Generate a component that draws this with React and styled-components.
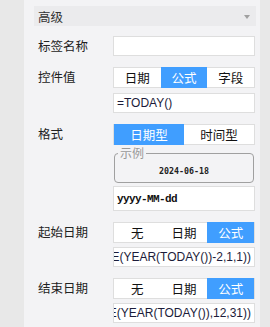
import React from 'react';
import styled, { createGlobalStyle } from 'styled-components';

const GlobalStyle = createGlobalStyle`
  body {
    margin: 0;
    background: #e8e8e8;
    font-family: "Noto Sans CJK SC", "Noto Sans", sans-serif;
    color: #222;
  }
`;

const Panel = styled.div`
  margin-left: 24px;
  width: 236px;
  min-height: 327px;
  box-sizing: border-box;
  background: #f3f3f5;
  padding: 6px 4px 0 10px;
`;

const Header = styled.div`
  height: 20px;
  background: #ebebed;
  display: flex;
  align-items: center;
  justify-content: space-between;
  padding: 0 6px 0 4px;
  font-size: 12.5px;
  color: #333;
`;

const Arrow = styled.span`
  width: 0;
  height: 0;
  border-left: 3.5px solid transparent;
  border-right: 3.5px solid transparent;
  border-top: 4px solid #a0a0a0;
  margin-top: 2px;
`;

const Rows = styled.div`
  display: flex;
  flex-direction: column;
  gap: 11px;
  margin-top: 10px;
  padding-left: 4px;
`;

const Row = styled.div`
  display: grid;
  grid-template-columns: 75px 142px;
`;

const Label = styled.div`
  font-size: 12.5px;
  line-height: 20px;
  color: #222;
`;

const Controls = styled.div`
  display: flex;
  flex-direction: column;
  gap: ${({ gap }) => gap}px;
`;

const Segmented = styled.div`
  display: flex;
  height: 21px;
  background: #fff;
  box-sizing: border-box;
  border: 1px solid #dedede;
`;

const Segment = styled.div`
  flex: 1;
  display: flex;
  align-items: center;
  justify-content: center;
  font-size: 12.5px;
  margin: -1px 0;
  background: ${({ active }) => (active ? '#409eff' : 'transparent')};
  color: ${({ active }) => (active ? '#fff' : '#111')};
`;

const Field = styled.div`
  height: ${({ tall }) => (tall ? 25 : 20)}px;
  box-sizing: border-box;
  background: #fff;
  border: 1px solid #dedede;
  display: flex;
  align-items: center;
  justify-content: ${({ end }) => (end ? 'flex-end' : 'flex-start')};
  overflow: hidden;
  white-space: nowrap;
  padding: 0 3px;
  font-family: "Liberation Sans", Arial, sans-serif;
  font-size: 12px;
  color: #1c1c3a;
`;

const Pattern = styled.span`
  font-family: "Liberation Mono", "Courier New", monospace;
  font-size: 11px;
  letter-spacing: -0.6px;
  font-weight: bold;
  color: #111;
`;

const Example = styled.fieldset`
  margin: -2px 1px 0;
  padding: 0 0 5px;
  border: 1px solid #a0a0a0;
  border-radius: 4px;
  text-align: center;
`;

const Legend = styled.legend`
  margin-left: 3px;
  padding: 0 2px;
  font-size: 12px;
  line-height: 14px;
  color: #999;
  text-align: left;
`;

const SampleDate = styled.div`
  margin-top: 5px;
  font-family: "DejaVu Sans Mono", monospace;
  font-size: 8.3px;
  font-weight: bold;
  line-height: 12px;
  color: #222;
`;

const DateRow = ({ label, formula }) => (
  <Row>
    <Label>{label}</Label>
    <Controls gap={4}>
      <Segmented>
        <Segment>无</Segment>
        <Segment>日期</Segment>
        <Segment active>公式</Segment>
      </Segmented>
      <Field end>{formula}</Field>
    </Controls>
  </Row>
);

const App = () => (
  <>
    <GlobalStyle />
    <Panel>
      <Header>
        高级
        <Arrow />
      </Header>
      <Rows>
        <Row>
          <Label>标签名称</Label>
          <Field />
        </Row>
        <Row>
          <Label>控件值</Label>
          <Controls gap={5}>
            <Segmented>
              <Segment>日期</Segment>
              <Segment active>公式</Segment>
              <Segment>字段</Segment>
            </Segmented>
            <Field>=TODAY()</Field>
          </Controls>
        </Row>
        <Row>
          <Label>格式</Label>
          <Controls gap={3}>
            <Segmented>
              <Segment active>日期型</Segment>
              <Segment>时间型</Segment>
            </Segmented>
            <Example>
              <Legend>示例</Legend>
              <SampleDate>2024-06-18</SampleDate>
            </Example>
            <Field tall>
              <Pattern>yyyy-MM-dd</Pattern>
            </Field>
          </Controls>
        </Row>
        <DateRow label="起始日期" formula="=DATE(YEAR(TODAY())-2,1,1))" />
        <DateRow label="结束日期" formula="=DATE(YEAR(TODAY()),12,31))" />
      </Rows>
    </Panel>
  </>
);

export default App;
